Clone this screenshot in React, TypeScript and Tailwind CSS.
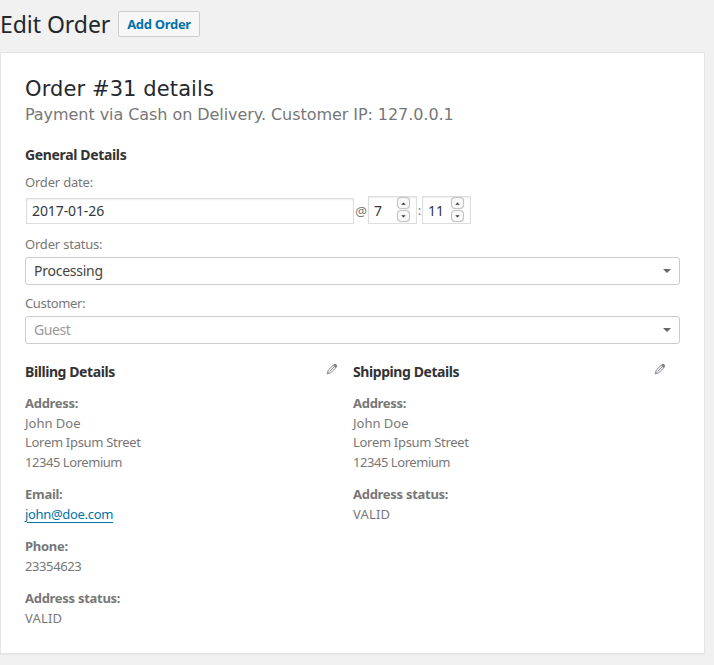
import type { ReactNode } from 'react';

function Pencil() {
  return (
    <svg width="12" height="12" viewBox="0 0 12 12" className="mt-[3px] shrink-0" fill="none">
      <path d="M1.2 10.8 2.2 7.2 7.4 2 10 4.6 4.8 9.8Z" fill="#eceaf0" stroke="#969397" strokeWidth="1" strokeLinejoin="round" />
      <path d="M7 2.4 8.4 1Q9.3.5 10.4 1.6T11 3.6L9.6 5Z" fill="#858285" />
      <path d="M3.5 8.5 8 4" stroke="#a5a2aa" strokeWidth="1" />
      <path d="M.7 11.3 1.5 8.4 3.7 10.4Z" fill="#989598" />
    </svg>
  );
}

function SpinButton({ up }: { up?: boolean }) {
  return (
    <span className="flex h-3 w-[13px] items-center justify-center rounded-[4px] border border-[#c2c2c2] bg-[#f8f8f8] shadow-[0_0_1px_#ccc]">
      <svg width="5" height="3" viewBox="0 0 5 3">
        <path d={up ? 'M.3 2.8 2.5.5 4.7 2.8Z' : 'M.3.2 2.5 2.5 4.7.2Z'} fill="#333" />
      </svg>
    </span>
  );
}

function NumberField({ value }: { value: string }) {
  return (
    <div className="flex h-7 w-[49px] items-center justify-between border border-[#ddd] bg-white pr-[6px] pl-[5px] text-[14px] text-[#32373c] shadow-[inset_0_1px_2px_rgba(0,0,0,0.07)]">
      <span className="pt-[2px]">{value}</span>
      <span className="-mt-px flex flex-col gap-px">
        <SpinButton up />
        <SpinButton />
      </span>
    </div>
  );
}

function Select({ value, muted }: { value: string; muted?: boolean }) {
  return (
    <div className={`flex h-7 items-center justify-between rounded-[3px] border border-[#ccc] bg-white pr-2 pl-2 text-[14px] ${muted ? 'text-[#999]' : 'text-[#444]'}`}>
      <span className={muted ? 'tracking-[-0.4px]' : 'tracking-[-0.25px]'}>{value}</span>
      <svg width="8" height="4" viewBox="0 0 8 4">
        <path d="M0 0H8L4 4Z" fill="#666" />
      </svg>
    </div>
  );
}

function Entry({ label, children }: { label: string; children: ReactNode }) {
  return (
    <div className="mb-[13px]">
      <div className="font-bold tracking-[-0.28px]">{label}</div>
      {children}
    </div>
  );
}

function Address() {
  return (
    <Entry label="Address:">
      <div>John Doe</div>
      <div className="tracking-[-0.3px]">Lorem Ipsum Street</div>
      <div className="tracking-[-0.45px]">12345 Loremium</div>
    </Entry>
  );
}

function Column({ title, children }: { title: string; children: ReactNode }) {
  return (
    <section className="w-[328px] shrink-0">
      <div className="flex h-[34px] justify-between pr-[15px]">
        <h3 className="pt-[2px] text-[14px] leading-5 font-bold tracking-[-0.42px] text-[#333]">{title}</h3>
        <Pencil />
      </div>
      {children}
    </section>
  );
}

export default function App() {
  return (
    <div className="h-[665px] w-[714px] overflow-hidden bg-[#f1f1f1] font-['Noto_Sans','Open_Sans',sans-serif] text-[13px] leading-[19.5px] text-[#777]">
      <header className="flex h-[52px] items-start pt-[11px]">
        <h1 className="w-[118px] text-[23px] leading-[26px] tracking-[-0.05px] whitespace-nowrap text-[#23282d]">Edit Order</h1>
        <button className="h-[26px] w-[82px] rounded-[2px] border border-[#ccc] bg-[#f7f7f7] text-[13px] leading-6 font-bold tracking-[-0.3px] whitespace-nowrap text-[#0073aa]">Add Order</button>
      </header>
      <main className="h-[602px] w-[705px] border border-[#e5e5e5] bg-white px-6 pt-[23px] shadow-[0_1px_1px_rgba(0,0,0,0.04)]">
        <h2 className="h-[26px] font-['DejaVu_Sans',sans-serif] text-[21px] leading-[26px] tracking-[0.1px] whitespace-nowrap text-[#23282d]">Order #31 details</h2>
        <p className="h-[42px] font-['DejaVu_Sans',sans-serif] text-[16px] leading-[25px] tracking-[-0.06px] whitespace-nowrap">Payment via Cash on Delivery. Customer IP: 127.0.0.1</p>
        <h3 className="h-[29px] pt-px text-[14px] leading-5 font-bold tracking-[-0.35px] text-[#333]">General Details</h3>
        <div className="h-[23px] tracking-[-0.2px]">Order date:</div>
        <div className="flex h-7 items-center">
          <div className="mt-px ml-px flex h-[26px] w-[328px] items-center border border-[#ddd] bg-white pl-[5px] text-[14px] tracking-[-0.1px] text-[#32373c] shadow-[inset_0_1px_2px_rgba(0,0,0,0.07)]">2017-01-26</div>
          <span className="w-[14px] pt-[3px] text-center text-[13px]">@</span>
          <NumberField value="7" />
          <span className="w-[5px] pt-[2px] text-center">:</span>
          <NumberField value="11" />
        </div>
        <div className="mt-[11px] h-[22px] tracking-[-0.2px]">Order status:</div>
        <Select value="Processing" />
        <div className="mt-[9px] h-[22px] tracking-[-0.35px]">Customer:</div>
        <Select value="Guest" muted />
        <div className="mt-[16px] flex">
          <Column title="Billing Details">
            <Address />
            <Entry label="Email:">
              <a className="tracking-[-0.32px] text-[#0073aa] underline decoration-1 underline-offset-[3px]">john@doe.com</a>
            </Entry>
            <Entry label="Phone:">
              <span className="tracking-[-0.4px]">23354623</span>
            </Entry>
            <Entry label="Address status:">
              <span className="tracking-[0.2px]">VALID</span>
            </Entry>
          </Column>
          <Column title="Shipping Details">
            <Address />
            <Entry label="Address status:">
              <span className="tracking-[0.2px]">VALID</span>
            </Entry>
          </Column>
        </div>
      </main>
    </div>
  );
}
